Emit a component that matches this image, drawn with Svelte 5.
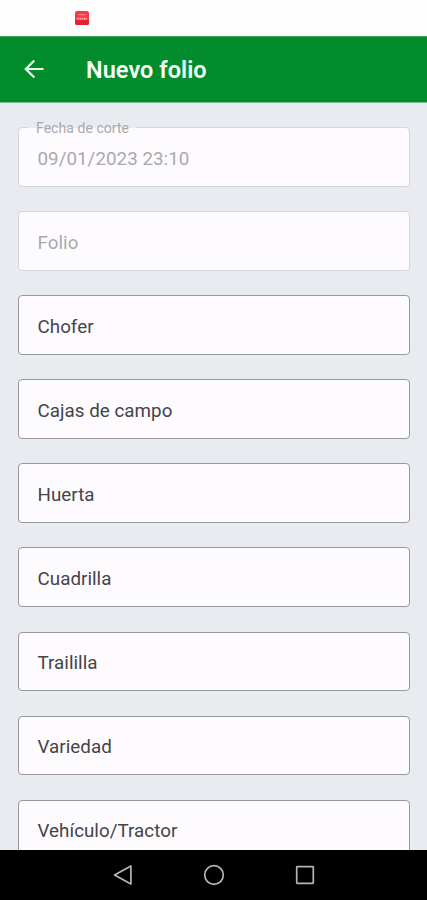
<script>
  const fields = [
    { label: 'Fecha de corte', value: '09/01/2023 23:10', disabled: true },
    { label: 'Folio', disabled: true },
    { label: 'Chofer' },
    { label: 'Cajas de campo' },
    { label: 'Huerta' },
    { label: 'Cuadrilla' },
    { label: 'Traililla' },
    { label: 'Variedad' },
    { label: 'Vehículo/Tractor' },
  ];
</script>

<div class="screen">
  <div class="status">
    <svg class="notice" width="14" height="14" viewBox="0 0 14 14">
      <rect width="14" height="14" rx="2" fill="#f43c48" />
      <path d="M0 9h14v3a2 2 0 0 1-2 2H2a2 2 0 0 1-2-2z" fill="#e8202f" />
      <path d="M3.5 3.7h7" stroke="#fa7f7a" stroke-width="1.2" />
      <path d="M2 7.7h10" stroke="#ff9da4" stroke-width="2" stroke-dasharray="1.8 .5" />
    </svg>
  </div>
  <header>
    <svg width="20" height="20" viewBox="0 0 20 20" fill="none" stroke="#f4fff4" stroke-width="2.2">
      <path d="M19.5 10H2M10.3 1.5 1.8 10l8.5 8.5" />
    </svg>
    <h1>Nuevo folio</h1>
  </header>
  <main>
    {#each fields as field}
      <div class="field" class:disabled={field.disabled}>
        {#if field.value}
          <span class="floating">{field.label}</span>
        {/if}
        <span class="text">{field.value ?? field.label}</span>
      </div>
    {/each}
  </main>
  <nav>
    <svg width="22" height="22" viewBox="0 0 22 22"><path d="M18.9 1.9v18.2L2.6 11z" /></svg>
    <svg width="22" height="22" viewBox="0 0 22 22"><circle cx="11" cy="11" r="9.3" /></svg>
    <svg width="22" height="22" viewBox="0 0 22 22"><rect x="2.7" y="2.7" width="16.6" height="16.6" rx=".6" /></svg>
  </nav>
</div>

<style>
  .screen {
    width: 427px;
    height: 900px;
    display: flex;
    flex-direction: column;
    overflow: hidden;
    background: #e8ebf0;
    font-family: Roboto, "Noto Sans", sans-serif;
  }
  .status {
    height: 36px;
    flex: none;
    box-sizing: border-box;
    padding: 11px 0 0 75px;
    background: #fefefe;
  }
  .notice { display: block; }
  header {
    height: 67px;
    flex: none;
    display: flex;
    align-items: center;
    gap: 42px;
    padding: 0 0 1px 24px;
    background: #028c2b;
    border-bottom: 1px solid #7abd90;
    box-sizing: border-box;
    border-top: 1px solid #429d5b;
  }
  h1 {
    margin: 1px 0 0;
    font-size: 23.5px;
    font-weight: 600;
    line-height: 30px;
    letter-spacing: .05px;
    color: #f6fff6;
  }
  main {
    flex: 1;
    min-height: 0;
    overflow: hidden;
    display: flex;
    flex-direction: column;
    gap: 24.6px;
    padding: 24px 17px 0 18px;
  }
  .field {
    position: relative;
    flex: none;
    height: 59.5px;
    box-sizing: border-box;
    display: flex;
    align-items: center;
    padding: 3.8px 18px 0 18.5px;
    border: 1px solid #97979c;
    border-radius: 4px;
    background: #fdfbfe;
    color: #454449;
  }
  .disabled {
    border-color: #d5d6da;
    color: #aaa9ad;
  }
  .text {
    font-size: 18.8px;
    line-height: 24px;
    letter-spacing: .03px;
    white-space: nowrap;
  }
  .floating {
    position: absolute;
    left: 9px;
    top: -9px;
    padding: 0 7px 0 8px;
    font-size: 14px;
    line-height: 18px;
    letter-spacing: .05px;
    background: linear-gradient(#e8ebf0 0 9px, #fdfbfe 9px);
    white-space: nowrap;
  }
  nav {
    height: 50px;
    flex: none;
    display: flex;
    justify-content: center;
    align-items: center;
    gap: 69px;
    background: #000;
  }
  nav svg {
    fill: none;
    stroke: #b5b5b5;
    stroke-width: 1.7;
    stroke-linejoin: round;
  }
</style>
